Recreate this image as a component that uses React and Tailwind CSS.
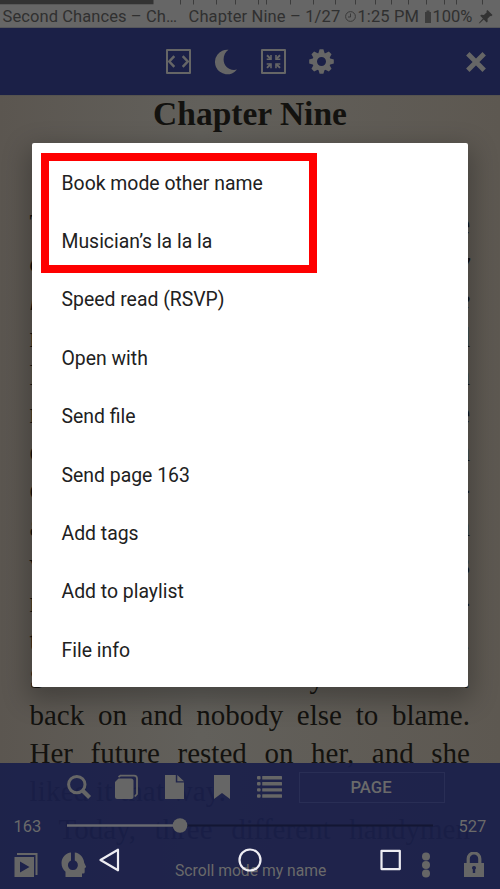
const ink = "text-[#13120f]";

const menu = [
  "Book mode other name",
  "Musician’s la la la",
  "Speed read (RSVP)",
  "Open with",
  "Send file",
  "Send page 163",
  "Add tags",
  "Add to playlist",
  "File info",
];

const edges = [
  ["T", "e"], ["o", "y", true], ["h", "e", true], ["r", "d"], ["l", "n"], ["r", "e"], ["o", "n"],
  ["c", "-"], ["a", "n"], ["v", "s"], ["r", "-"], ["t", "."],
];

const ticks = [180, 193, 216, 235, 258, 266, 290, 313, 335, 355, 375, 391, 408, 426, 444, 456, 482];

function CodeBox() {
  return (
    <svg width="25" height="25" viewBox="0 0 25 25" fill="none" stroke="#666" strokeWidth="2">
      <path d="M1 1h23v23H1z" strokeLinejoin="round" />
      <path d="M8.3 7.2 3.3 12.5l5 5.3M16.7 7.2l5 5.3-5 5.3" strokeWidth="2.5" />
    </svg>
  );
}
function Moon() {
  return (
    <svg width="23" height="26" viewBox="0 0 23 26" fill="#666">
      <path d="M13.5.8A12.3 12.3 0 1 0 22 20.6C14 22.3 8.6 17 8.6 10.500C8.600 6.300 10.500 2.900 13.500.8Z" />
    </svg>
  );
}
function CompressBox() {
  return (
    <svg width="25" height="25" viewBox="0 0 25 25" fill="none" stroke="#666" strokeWidth="2">
      <path d="M1 1h23v23H1z" strokeLinejoin="round" />
      <path d="M6 6.300l3.600 3.600M19 6.300l-3.600 3.600M6 18.900l3.600-3.600M19 18.900l-3.600-3.600" />
      <path d="M5.700 10.200h4.300V5.900M19.300 10.200h-4.300V5.900M5.700 15h4.300v4.300M19.300 15h-4.300v4.300" strokeWidth="1.600" />
    </svg>
  );
}
function Gear() {
  return (
    <svg width="25" height="25" viewBox="-12.5 -12.5 25 25" fill="#666">
      {[0, 45, 90, 135, 180, 225, 270, 315].map((a) => (
        <path key={a} d="M-3.200-8 -1.900-12.300H1.900L3.200-8Z" transform={`rotate(${a})`} />
      ))}
      <circle r="6.800" fill="none" stroke="#666" strokeWidth="4.600" />
    </svg>
  );
}

function StatusBar() {
  return (
    <header className="h-[28px] shrink-0 bg-[#666] border-b border-[#55565a]">
      <svg className="block" width="500" height="5">
        <path d="M0 0h153.500v4.300H0z" fill="#333" />
        {ticks.map((x) => (
          <path key={x} d={`M${x + 0.5} 0v4.500`} stroke="#3c3c3c" strokeWidth="1" />
        ))}
      </svg>
      <div className="flex h-[23px] items-center whitespace-nowrap pl-[2.500px] text-[16.5px] leading-[23px] text-[#303030]">
        <span className="w-[186px] tracking-[0.09px]">Second Chances – Ch…</span>
        <span className="w-[155px] tracking-[0.14px]">Chapter Nine – 1/27</span>
        <svg width="14" height="14" viewBox="0 0 14 14" fill="none" stroke="#3a3a3a" strokeWidth="1">
          <circle cx="6.500" cy="6.500" r="4.900" />
          <path d="M6.500 3.500v3.500H4" />
        </svg>
        <span className="w-[66px] tracking-[0.1px]">1:25 PM</span>
        <svg width="9" height="14" viewBox="0 0 9 14">
          <path d="M1 2h1.500V.5h3V2H7v11H1z" fill="#3d3d3d" />
        </svg>
        <span className="w-[45px]">100%</span>
        <svg width="16" height="16" viewBox="0 0 16 16" fill="#333">
          <path d="M9.500 1 14.500 6l-1.300 1.200-1-.3-2.700 2.800.2 2.700-1 1-3-3L2 14.100l-1.200.5.500-1.200 3.600-3.800-2.700-2.800 1-1 2.700.3 2.900-2.800-.4-1.200z" />
        </svg>
      </div>
    </header>
  );
}

function BottomPanel() {
  return (
    <footer className="absolute inset-x-0 bottom-0 flex h-[126px] flex-col bg-[#1a1f4a]/93 text-[#6a6a6a]">
      <div className="flex h-[48px] items-center pl-[67px]">
        <svg className="w-[48px]" width="48" height="26" viewBox="0 0 48 26" fill="none" stroke="#666">
          <circle cx="9.800" cy="10.600" r="8.200" strokeWidth="3" />
          <path d="m15.800 16.800 6.800 6.800" strokeWidth="4.200" />
        </svg>
        <svg width="50" height="26" viewBox="0 0 50 26" fill="#666">
          <path d="M0 8 3.500 4.500H16Q18.500 4.500 18.500 7v16q0 2-2 2H2q-2 0-2-2z" />
          <path d="M3.500 3 5.500 1.600H19q3 0 3 3V20l-2.200 2.500" fill="none" stroke="#666" strokeWidth="1.800" />
        </svg>
        <svg width="49" height="26" viewBox="0 0 49 26" fill="#666">
          <path d="M0 1h10.800v7.500H19V25H0zM12.300 1 19 7.200h-6.700z" />
        </svg>
        <svg width="43" height="26" viewBox="0 0 43 26" fill="#666">
          <path d="M0 1h16v24l-8-6-8 6z" />
        </svg>
        <svg width="25" height="24" viewBox="0 0 25 24" fill="#666">
          {[1, 7.1, 13.200, 19.300].map((y) => (
            <g key={y}>
              <rect x="0" y={y} width="3.600" height="3.400" rx="1" />
              <rect x="5.200" y={y} width="19.800" height="3.400" rx=".5" />
            </g>
          ))}
        </svg>
        <div className="ml-[17px] flex h-[31px] w-[146px] items-center justify-center border border-[#292e55] pt-[1px] pr-[2px] text-[16.700px] font-medium">
          PAGE
        </div>
      </div>
      <div className="flex h-[30px] items-center pl-[13.500px] text-[16.500px]">
        <span className="w-[53.500px] pt-[2px]">163</span>
        <svg width="391.500" height="16" viewBox="0 0 391.500 16">
          <path d="M113 7.500h253" stroke="#131633" strokeWidth="2" />
          <path d="M0 7.500h113" stroke="#696a70" strokeWidth="2.500" />
          <circle cx="113" cy="7.500" r="7.300" fill="#666" />
        </svg>
        <span className="pt-[2px]">527</span>
      </div>
      <div className="flex h-[48px] items-center pl-[14px]">
        <svg width="47" height="26" viewBox="0 0 47 26" fill="#666">
          <path fillRule="evenodd" d="M.5 5H20v20H.5zM6 9.500v11l9.500-5.500z" />
          <path d="M3 2h19.500v21" fill="none" stroke="#666" strokeWidth="2" />
        </svg>
        <svg width="114" height="26" viewBox="0 0 114 26" fill="#666">
          <path d="M10 .5C5 1 .5 5 .5 11c0 4 1.600 6.300 4 8.800V25h16.500v-3.500h1.200q1.500 0 1.500-1.500v-3.800l1.500-1.200-2-4.300C22.800 5.500 18.500 1 13.800.5V8.500a5 5 0 1 1-3.800 0z" />
        </svg>
        <span className="mt-[12px] w-[246px] whitespace-nowrap text-[15.700px]">Scroll mode my name</span>
        <svg width="43" height="26" viewBox="0 0 43 26" fill="#666">
          <circle cx="5" cy="4.500" r="4" />
          <circle cx="5" cy="13" r="4" />
          <circle cx="5" cy="21.500" r="4" />
        </svg>
        <svg width="20" height="26" viewBox="0 0 20 26" fill="#666">
          <path d="M4.200 12V6.800a5.800 5.800 0 0 1 11.600 0V12" fill="none" stroke="#666" strokeWidth="3.200" />
          <path fillRule="evenodd" d="M0 11h20v14H0zM10 14a2 2 0 0 0-1.200 3.600V21h2.400v-3.400A2 2 0 0 0 10 14z" />
        </svg>
      </div>
    </footer>
  );
}

function SystemNav() {
  return (
    <nav className="absolute left-[99px] top-[847px]">
      <svg width="304" height="26" viewBox="0 0 304 26" fill="none" stroke="#eeedf3" strokeWidth="2.200" strokeLinejoin="round">
        <path d="M1.500 13 19 2.700v20.600z" />
        <circle cx="151" cy="13" r="10.500" />
        <path d="M282.500 3.800h18.300v18.300h-18.300z" />
      </svg>
    </nav>
  );
}

export default function App() {
  return (
    <div className="relative flex h-[889px] w-[500px] flex-col overflow-hidden bg-[#605d57] font-[Roboto,sans-serif]">
      <StatusBar />
      <div className="flex h-[67px] shrink-0 items-center bg-[#1b2047] pl-[166px]">
        <span className="w-[49px]"><CodeBox /></span>
        <span className="w-[46px]"><Moon /></span>
        <span className="w-[48px]"><CompressBox /></span>
        <span className="w-[157px]"><Gear /></span>
        <svg width="20" height="20" viewBox="0 0 20 20" stroke="#666" strokeWidth="4.800">
          <path d="m1.800 1.800 16.400 16.400M18.200 1.800 1.800 18.200" />
        </svg>
      </div>
      <main className={`flex-1 overflow-hidden border-t border-[#55534f] bg-linear-to-r from-[#5b5650] via-[#62605b] via-40% to-[#5d5851] font-['Liberation_Serif',serif] ${ink}`}>
        <h1 className="h-[110px] text-center text-[33.500px] font-bold leading-[36px]">Chapter Nine</h1>
        <div className="ml-[29.500px] w-[440.500px] text-[29px] leading-[37.8px]">
          {edges.map(([a, b, it], i) => (
            <p key={i} className={it ? "flex justify-between italic" : "flex justify-between"}>
              <span>{a}</span>
              <span>{b}</span>
            </p>
          ))}
          <p className="flex justify-between"><span className="w-[280px]">S</span><span className="flex-1">y</span><span>.</span></p>
          <p className="whitespace-nowrap [text-align-last:justify]">back on and nobody else to blame.</p>
          <p className="whitespace-nowrap [text-align-last:justify]">Her future rested on her, and she</p>
          <p className="tracking-[0.2px]">liked it that way.</p>
          <p className="whitespace-nowrap pl-[29px] [text-align-last:justify]">Today, three different handymen</p>
        </div>
      </main>
      <BottomPanel />
      <div className="absolute left-[32px] top-[143px] h-[544px] w-[436px] rounded-[2px] bg-white py-[11.200px] shadow-[0_9px_26px_4px_rgba(0,0,0,0.28)]">
        <ul>
          {menu.map((label) => (
            <li key={label} className="flex h-[58.35px] items-center pl-[29.500px] text-[19.400px] text-[#212121]">
              <span>{label}</span>
            </li>
          ))}
        </ul>
        <div className="absolute left-[9px] top-[10px] h-[120px] w-[276px] border-8 border-[#fe0000]" />
      </div>
      <SystemNav />
    </div>
  );
}
